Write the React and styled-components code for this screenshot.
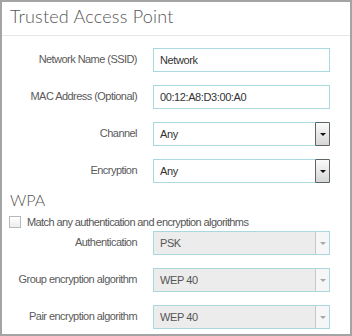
import React from "react";
import styled, { createGlobalStyle } from "styled-components";

const GlobalStyle = createGlobalStyle`
  html, body {
    margin: 0;
    padding: 0;
    background: #ffffff;
  }
  body {
    font-family: "Liberation Sans", Arial, sans-serif;
  }
`;

const Panel = styled.div`
  width: 352px;
  height: 336px;
  box-sizing: border-box;
  border: 2px solid #a4a4a4;
  background: #ffffff;
  overflow: hidden;
`;

const Header = styled.div`
  border-bottom: 1px solid #e6e6e6;
  padding: 3px 0 0 8px;
  height: 30px;
`;

const Title = styled.h1`
  margin: 0;
  font-family: Lato, "Open Sans", sans-serif;
  font-weight: 300;
  font-size: 18px;
  letter-spacing: 0.2px;
  line-height: 22px;
  color: #555555;
`;

const Body = styled.div`
  padding-top: 12px;
`;

const Rows = styled.div`
  display: grid;
  row-gap: 13px;
`;

const Row = styled.div`
  display: grid;
  grid-template-columns: 135px 177px;
  column-gap: 16px;
  align-items: center;
  height: 24px;
`;

const Label = styled.label`
  text-align: right;
  font-size: 11px;
  letter-spacing: -0.55px;
  color: #5a5a5a;
  white-space: nowrap;
  padding-bottom: 2px;
`;

const Field = styled.div`
  display: flex;
  align-items: stretch;
  height: 24px;
  box-sizing: border-box;
  border: 1px solid #aad8df;
  background: ${(p) => (p.disabled ? "#ececec" : "#ffffff")};
`;

const Value = styled.span`
  flex: 1;
  display: flex;
  align-items: center;
  padding-left: 6px;
  font-size: 11px;
  letter-spacing: -0.4px;
  color: ${(p) => (p.disabled ? "#555555" : "#333333")};
`;

const Arrow = styled.span`
  width: 14px;
  display: flex;
  align-items: center;
  justify-content: center;
  box-sizing: border-box;
  ${(p) =>
    p.disabled
      ? `
    border-left: 1px solid #c8c8c8;
    background: #f6f6f6;
  `
      : `
    border: 1px solid #5e6466;
    border-radius: 1px;
    background: linear-gradient(#fbfbfb, #d6d6d6);
    margin: -1px -1px -1px 0;
    width: 15px;
  `}

  &::after {
    content: "";
    border-left: 3px solid transparent;
    border-right: 3px solid transparent;
    border-top: 3px solid ${(p) => (p.disabled ? "#a8a8a8" : "#111111")};
    margin-top: 1px;
  }
`;

const Section = styled.h2`
  margin: 8px 0 0 8px;
  font-family: Lato, "Open Sans", sans-serif;
  font-weight: 300;
  font-size: 16px;
  line-height: 18px;
  color: #555555;
`;

const CheckRow = styled.label`
  display: flex;
  align-items: center;
  gap: 6px;
  margin: 6px 0 3px 7px;
  height: 13px;
  font-size: 11px;
  letter-spacing: -0.6px;
  color: #555555;
`;

const Box = styled.span`
  width: 12px;
  height: 12px;
  box-sizing: border-box;
  border: 1px solid #b9b9b9;
  background: linear-gradient(#ffffff, #ededed);
  flex: none;
`;

const TextInput = ({ value }) => (
  <Field>
    <Value>{value}</Value>
  </Field>
);

const Select = ({ value, disabled }) => (
  <Field disabled={disabled}>
    <Value disabled={disabled}>{value}</Value>
    <Arrow disabled={disabled} />
  </Field>
);

const top = [
  { label: "Network Name (SSID)", value: "Network" },
  { label: "MAC Address (Optional)", value: "00:12:A8:D3:00:A0" },
  { label: "Channel", value: "Any", select: true },
  { label: "Encryption", value: "Any", select: true },
];

const wpa = [
  { label: "Authentication", value: "PSK" },
  { label: "Group encryption algorithm", value: "WEP 40" },
  { label: "Pair encryption algorithm", value: "WEP 40" },
];

export default function App() {
  return (
    <>
      <GlobalStyle />
      <Panel>
        <Header>
          <Title>Trusted Access Point</Title>
        </Header>
        <Body>
          <Rows>
            {top.map((r) => (
              <Row key={r.label}>
                <Label>{r.label}</Label>
                {r.select ? <Select value={r.value} /> : <TextInput value={r.value} />}
              </Row>
            ))}
          </Rows>
          <Section>WPA</Section>
          <CheckRow>
            <Box />
            Match any authentication and encryption algorithms
          </CheckRow>
          <Rows>
            {wpa.map((r) => (
              <Row key={r.label}>
                <Label>{r.label}</Label>
                <Select value={r.value} disabled />
              </Row>
            ))}
          </Rows>
        </Body>
      </Panel>
    </>
  );
}
